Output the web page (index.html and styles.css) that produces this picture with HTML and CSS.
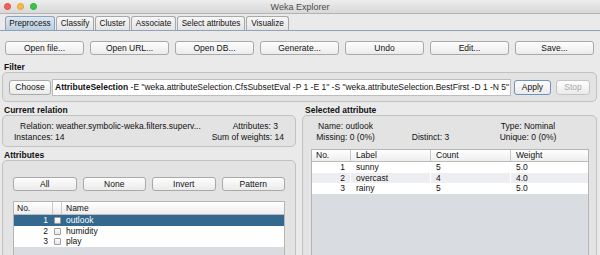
FILE: index.html
```html
<!DOCTYPE html>
<html lang="en">
<head>
    <meta charset="UTF-8">
    <title>Weka Explorer</title>
    <link rel="stylesheet" href="styles.css">
</head>
<body>
    <div class="window">
        <div class="titlebar">
            <div class="lights">
                <span class="light red"></span>
                <span class="light yellow"></span>
                <span class="light green"></span>
            </div>
            <span class="title">Weka Explorer</span>
            <span></span>
        </div>

        <div class="tabbar">
            <span class="tab active w-pre">Preprocess</span>
            <span class="tab w-cla">Classify</span>
            <span class="tab w-clu">Cluster</span>
            <span class="tab w-ass">Associate</span>
            <span class="tab w-sel">Select attributes</span>
            <span class="tab w-vis">Visualize</span>
        </div>

        <div class="toolbar">
            <button class="btn">Open file...</button>
            <button class="btn">Open URL...</button>
            <button class="btn">Open DB...</button>
            <button class="btn">Generate...</button>
            <button class="btn">Undo</button>
            <button class="btn">Edit...</button>
            <button class="btn">Save...</button>
        </div>

        <div class="filter">
            <div class="group-title">Filter</div>
            <div class="box filter-box">
                <button class="btn choose">Choose</button>
                <div class="filter-field"><b>AttributeSelection</b> -E "weka.attributeSelection.CfsSubsetEval -P 1 -E 1" -S "weka.attributeSelection.BestFirst -D 1 -N 5"</div>
                <button class="btn apply">Apply</button>
                <button class="btn stop" disabled>Stop</button>
            </div>
        </div>

        <div class="columns">
            <div class="left">
                <div class="group-title">Current relation</div>
                <div class="box relation-box">
                    <div class="info-row first">
                        <span>Relation: weather.symbolic-weka.filters.superv...</span>
                        <span>Attributes: 3</span>
                    </div>
                    <div class="info-row second">
                        <span>Instances: 14</span>
                        <span>Sum of weights: 14</span>
                    </div>
                </div>

                <div class="group-title attr-title">Attributes</div>
                <div class="box attr-box">
                    <div class="attr-buttons">
                        <button class="btn">All</button>
                        <button class="btn">None</button>
                        <button class="btn">Invert</button>
                        <button class="btn">Pattern</button>
                    </div>
                    <div class="table attr-table">
                        <div class="row head">
                            <span class="cell">No.</span>
                            <span class="cell"></span>
                            <span class="cell">Name</span>
                        </div>
                        <div class="row selected">
                            <span class="cell num">1</span>
                            <span class="cell"><span class="check"></span></span>
                            <span class="cell">outlook</span>
                        </div>
                        <div class="row">
                            <span class="cell num">2</span>
                            <span class="cell"><span class="check"></span></span>
                            <span class="cell">humidity</span>
                        </div>
                        <div class="row">
                            <span class="cell num">3</span>
                            <span class="cell"><span class="check"></span></span>
                            <span class="cell">play</span>
                        </div>
                    </div>
                </div>
            </div>

            <div class="right">
                <div class="group-title">Selected attribute</div>
                <div class="box selected-box">
                    <div class="attr-info">
                        <span>Name: outlook</span>
                        <span></span>
                        <span>Type: Nominal</span>
                        <span>Missing: 0 (0%)</span>
                        <span>Distinct: 3</span>
                        <span>Unique: 0 (0%)</span>
                    </div>
                    <div class="table stats-table">
                        <div class="row head">
                            <span class="cell">No.</span>
                            <span class="cell">Label</span>
                            <span class="cell">Count</span>
                            <span class="cell">Weight</span>
                        </div>
                        <div class="row">
                            <span class="cell num">1</span>
                            <span class="cell">sunny</span>
                            <span class="cell">5</span>
                            <span class="cell">5.0</span>
                        </div>
                        <div class="row stripe">
                            <span class="cell num">2</span>
                            <span class="cell">overcast</span>
                            <span class="cell">4</span>
                            <span class="cell">4.0</span>
                        </div>
                        <div class="row">
                            <span class="cell num">3</span>
                            <span class="cell">rainy</span>
                            <span class="cell">5</span>
                            <span class="cell">5.0</span>
                        </div>
                    </div>
                </div>
            </div>
        </div>
    </div>
</body>
</html>
```

FILE: styles.css
```css
* {
    box-sizing: border-box;
}

body {
    margin: 0;
    background-color: #eaeaea;
    font-family: "Liberation Sans", Arial, sans-serif;
    font-size: 8.5px;
    color: #111;
}

.window {
    width: 600px;
    height: 255px;
    overflow: hidden;
}

/* title bar */
.titlebar {
    height: 14px;
    display: grid;
    grid-template-columns: 1fr auto 1fr;
    align-items: center;
    background: linear-gradient(#ededed, #d8d8d8);
    border-bottom: 1px solid #b3b3b3;
}

.lights {
    display: flex;
    gap: 6px;
    padding-left: 4px;
}

.light {
    width: 7px;
    height: 7px;
    border-radius: 50%;
}

.red { background-color: #f9605a; border: 1px solid #e0463f; }
.yellow { background-color: #f9bd3d; border: 1px solid #dea132; }
.green { background-color: #35c748; border: 1px solid #27aa35; }

.title {
    font-size: 9px;
    color: #4a4a4a;
}

/* tabs */
.tabbar {
    height: 17px;
    display: flex;
    align-items: flex-end;
    gap: 1px;
    padding-left: 5px;
    border-bottom: 1px solid #8ea3ba;
}

.tab {
    height: 14px;
    line-height: 13px;
    text-align: center;
    border: 1px solid #a8a8a8;
    border-bottom: none;
    border-radius: 3px 3px 0 0;
    background: linear-gradient(#f7f7f7, #e4e4e4);
    font-size: 8.2px;
}

.tab.active {
    background: linear-gradient(#dce7f1, #bccfe0);
    border-color: #8ea3ba;
}

.w-pre { width: 50px; }
.w-cla { width: 38px; }
.w-clu { width: 35px; }
.w-ass { width: 45px; }
.w-sel { width: 68px; }
.w-vis { width: 43px; }

/* buttons */
.btn {
    height: 14px;
    padding: 0;
    font-family: inherit;
    font-size: 8.5px;
    color: #111;
    border: 1px solid #a9a9a9;
    border-radius: 3px;
    background: linear-gradient(#fdfdfd, #ebebeb);
}

.toolbar {
    display: flex;
    gap: 6px;
    padding: 10px 6px 0 5px;
}

.toolbar .btn {
    flex: 1;
}

/* group boxes */
.group-title {
    height: 10px;
    line-height: 10px;
    padding-left: 2px;
    font-size: 8.5px;
    font-weight: bold;
}

.box {
    border: 1px solid #c1c1c1;
    border-radius: 5px;
    background-color: #e3e3e3;
}

.filter {
    padding: 7px 3px 0 2px;
}

.filter-box {
    height: 30px;
    display: flex;
    align-items: center;
    padding: 0 6px;
}

.choose {
    width: 42px;
    height: 15px;
}

.filter-field {
    flex: 1;
    height: 17px;
    line-height: 15px;
    margin-left: 1px;
    padding-left: 2px;
    background-color: white;
    border: 1px solid #bdbdbd;
    white-space: nowrap;
    overflow: hidden;
}

.apply {
    width: 37px;
    height: 15px;
    margin-left: 3px;
    border-color: #6f93c0;
}

.stop {
    width: 34px;
    height: 15px;
    margin-left: 5px;
    color: #a9a9a9;
    border-color: #c4c4c4;
}

/* columns */
.columns {
    display: grid;
    grid-template-columns: 294px 295px;
    gap: 6px;
    padding: 3px 0 0 2px;
}

.right .group-title {
    padding-left: 3px;
}

.relation-box {
    height: 32px;
    padding-top: 5px;
}

.info-row {
    height: 11px;
    line-height: 11px;
    display: flex;
    justify-content: space-between;
}

.info-row.first {
    padding: 0 17px;
}

.info-row.second {
    padding: 0 11px;
}

.attr-title {
    margin-top: 3px;
}

.attr-box {
    height: 110px;
    padding: 16px 10px 0 10px;
}

.attr-buttons {
    display: flex;
    gap: 6px;
}

.attr-buttons .btn {
    flex: 1;
}

.selected-box {
    height: 150px;
    padding: 5px 7px 0 8px;
}

.attr-info {
    display: grid;
    grid-template-columns: 85px 85px 110px;
    grid-auto-rows: 11px;
    line-height: 11px;
    justify-items: center;
    margin-left: -8px;
}

/* tables */
.table {
    border: 1px solid #b5b5b5;
    background-color: #d9dce1;
}

.row {
    display: grid;
    height: 10.5px;
    line-height: 10.5px;
    background-color: white;
}

.row.head {
    height: 13px;
    line-height: 12px;
    background: linear-gradient(#ffffff, #eeeeee);
    border-bottom: 1px solid #bcbcbc;
}

.cell {
    padding-left: 4px;
    white-space: nowrap;
}

.row .cell + .cell {
    border-left: 1px solid white;
}

.row.head .cell + .cell {
    border-left: 1px solid #c9c9c9;
}

.row.head .cell {
    padding-left: 3px;
}

.cell.num {
    text-align: right;
    padding-right: 4px;
}

.attr-table {
    height: 60px;
    margin-top: 10px;
}

.attr-table .row {
    grid-template-columns: 38px 9px 1fr;
}

.attr-table .row.head .cell:last-child {
    padding-left: 4px;
}

.row.selected {
    background-color: #33688f;
    color: white;
}

.row.selected .cell + .cell {
    border-left-color: #33688f;
}

.check {
    display: inline-block;
    width: 7px;
    height: 7px;
    margin-left: -3px;
    vertical-align: -1px;
    border: 1px solid #9c9c9c;
    border-radius: 1px;
    background: linear-gradient(#ffffff, #e6e6e6);
}

.stats-table {
    height: 120px;
    margin-top: 6px;
}

.stats-table .row {
    grid-template-columns: 38px 80px 80px 1fr;
}

.stats-table .row.head {
    height: 12px;
    line-height: 11px;
}

.stats-table .row .cell {
    padding-left: 5px;
}

.stats-table .row .cell.num {
    padding-right: 5px;
}

.stats-table .row.head .cell:first-child {
    padding-left: 4px;
}

.row.stripe .cell {
    background-color: #edeef1;
}
```
